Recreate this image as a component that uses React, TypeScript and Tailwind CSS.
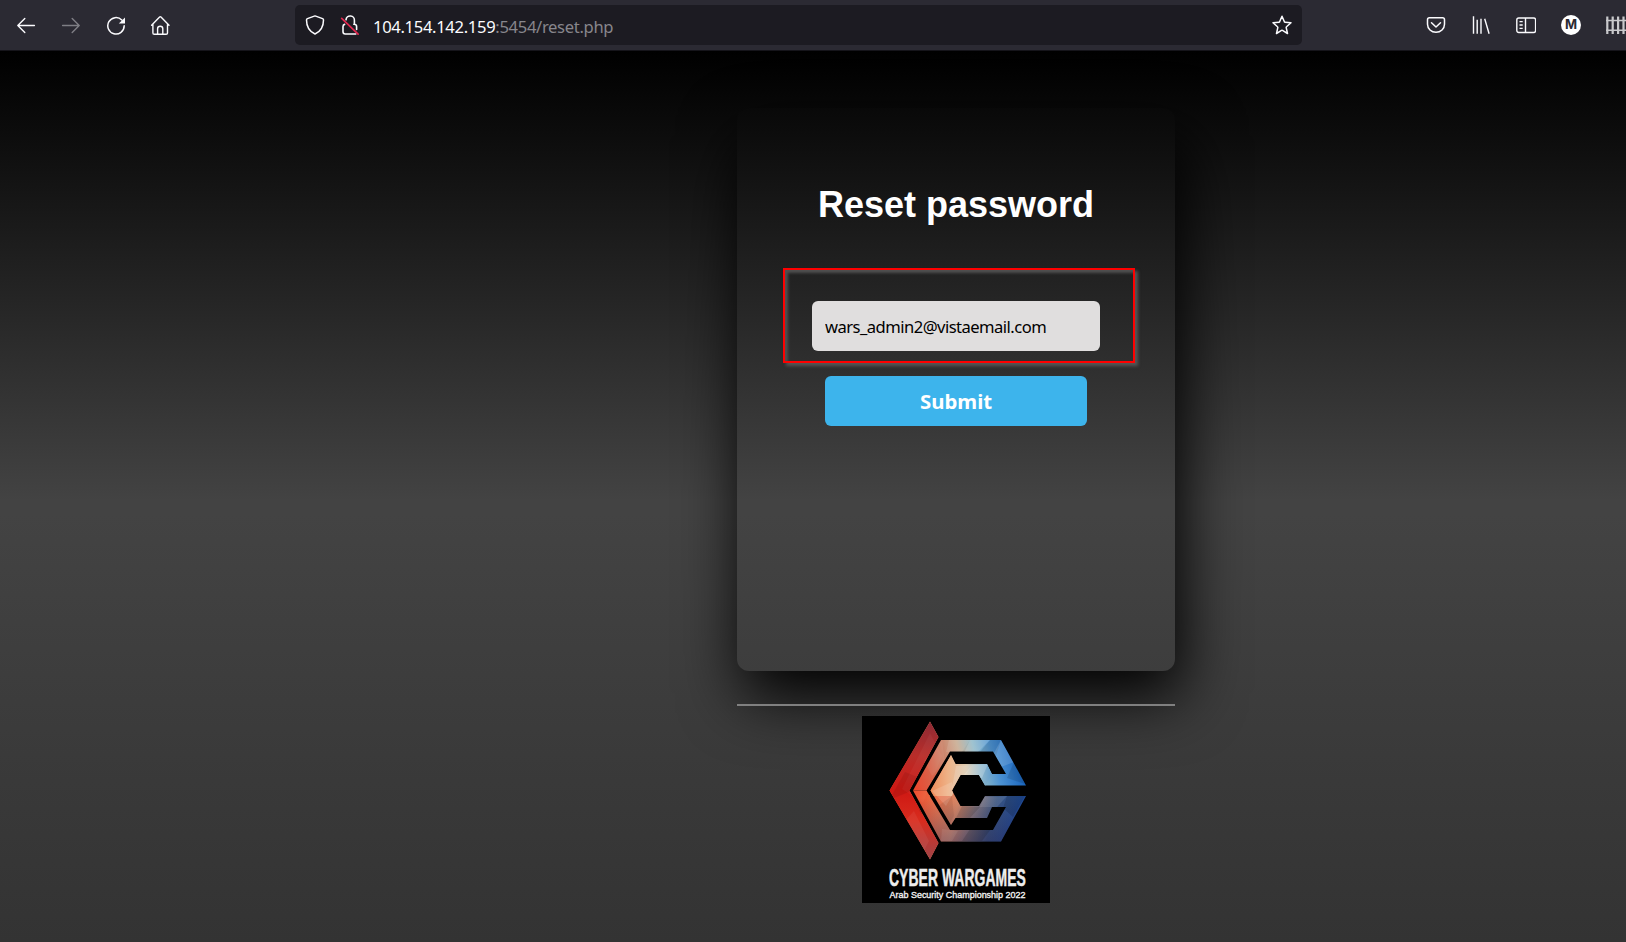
import React from "react";

function Toolbar() {
  return (
    <header className="flex h-[51px] shrink-0 items-start overflow-hidden border-b border-[#15141a] bg-[#2b2a33] text-[#fbfbfe]">
      <nav className="flex w-[295px] shrink-0 items-center gap-[25px] pl-4 pt-[15px]">
        <svg className="size-5" viewBox="0 0 20 20" fill="none" stroke="currentColor" strokeWidth="1.4" strokeLinecap="round" strokeLinejoin="round">
          <path d="M18.4 10.5H1.8M8.8 3.5l-7 7 7 7" />
        </svg>
        <svg className="size-5 opacity-40" viewBox="0 0 20 20" fill="none" stroke="currentColor" strokeWidth="1.4" strokeLinecap="round" strokeLinejoin="round">
          <path d="M1.6 10.5h16.6M11.2 3.5l7 7-7 7" />
        </svg>
        <svg className="size-5" viewBox="0 0 20 20" fill="none" stroke="currentColor" strokeWidth="1.5" strokeLinecap="round">
          <path d="M18.2 10.8a8.2 8.2 0 1 1-2.4-5.8" />
          <path d="M19 2.4v6.2h-6.2z" fill="currentColor" stroke="none" />
        </svg>
        <svg className="-ml-px size-5" viewBox="0 0 20 20" fill="none" stroke="currentColor" strokeWidth="1.4" strokeLinecap="round" strokeLinejoin="round">
          <path d="M1.6 10.2 9.6 2q.7-.7 1.4 0l8 8.2M2.9 9v8.9q0 1.4 1.4 1.4h11.8q1.4 0 1.4-1.4V9M7.6 19v-5.2a2.6 2.6 0 0 1 5.2 0V19" />
        </svg>
      </nav>
      <div className="mt-[5px] flex h-10 w-[1007px] shrink-0 items-center rounded-[5px] bg-[#1c1b22] pl-[10px] pr-[10px]">
        <svg className="size-5 shrink-0" viewBox="0 0 20 20" fill="none" stroke="currentColor" strokeWidth="1.5" strokeLinejoin="round">
          <path d="M10 .9 17.6 3.6q.9.4.9 1.3C18.5 11.5 15.3 16.5 10 19 4.7 16.5 1.5 11.5 1.5 4.9q0-.9.9-1.3z" />
        </svg>
        <svg className="ml-[15px] size-5 shrink-0" viewBox="0 0 20 20" fill="none" strokeLinecap="round">
          <path d="M6 4.8a4.2 4.2 0 0 1 8.4.8v3.7M13.8 9.3q2.8 0 2.8 2.2v3M15.8 19H5.2q-2.2 0-2.2-2.2v-5.4q0-1.6 1.6-2" stroke="currentColor" strokeWidth="1.6" />
          <path d="m1.7 3.3 16.4 15.9" stroke="#e22850" strokeWidth="1.7" />
        </svg>
        <span className="ml-[13px] grow pt-[4px] font-['Noto_Sans',sans-serif] text-[16.6px] tracking-[-0.33px]">
          104.154.142.159<span className="text-[#87868c]">:5454/reset.php</span>
        </span>
        <svg className="size-5 shrink-0" viewBox="0 0 20 20" fill="none" stroke="currentColor" strokeWidth="1.5" strokeLinejoin="round">
          <path d="m10 1.2 2.4 5.6q.2.4.6.4l6 .5-4.5 4.1q-.4.3-.3.8l1.3 5.9-5-3.1q-.5-.3-1 0l-5 3.1 1.3-5.9q.1-.5-.3-.8L1 7.7l6-.5q.4 0 .6-.4z" />
        </svg>
      </div>
      <div className="flex shrink-0 items-center gap-[25px] pl-[124px] pt-[15px]">
        <svg className="size-5" viewBox="0 0 20 20" fill="none" stroke="currentColor" strokeWidth="1.5" strokeLinecap="round" strokeLinejoin="round">
          <path d="M3.4 2.8h13.2q1.9 0 1.9 1.9v4.6a8.5 8 0 0 1-17 0V4.7q0-1.9 1.9-1.9zM5.5 7.7 10 12l4.5-4.3" />
        </svg>
        <svg className="size-5" viewBox="0 0 20 20" fill="none" stroke="currentColor" strokeWidth="1.4">
          <path d="M2.5 1.3v17.5M6.2 4.8v14M10 3.7v15.1M13.7 3.8l4.4 15" />
        </svg>
        <svg className="size-5" viewBox="0 0 20 20" fill="none" stroke="currentColor" strokeWidth="1.4">
          <rect x=".8" y="3" width="18.8" height="14.5" rx="2" />
          <path d="M9.5 3v14.5M3.5 6.6h3.2M3.5 10h3.2M3.5 13.4h3.2" />
        </svg>
        <span className="flex size-5 items-center justify-center rounded-full bg-white font-['Inter',sans-serif] text-[13px] font-bold text-[#2b2a33]">M</span>
        <svg className="-ml-px h-5 w-[22px]" viewBox="0 0 22 20" fill="none" stroke="#c8c8cb" strokeWidth="2.2">
          <path d="M2.3 1.6V19M7.7 1.6V19M13.1 1.6V19M18.5 1.6V19" />
          <path d="M1 5.5h21M1 15.2h21" strokeWidth="1.5" />
        </svg>
      </div>
    </header>
  );
}

const facets: [string, string, number][] = [
  ["40,73 68,17 80,40 61,87", "#fff", 0.04],
  ["27,84 43,56 58,62 47,76", "#000", 0.08],
  ["36,112 52,95 67,125 61,137", "#fff", 0.06],
  ["62,45 80,24 83,46 70,60", "#fff", 0.06],
  ["58,96 72,110 62,100 52,80", "#000", 0.12],
  ["87,24 108,24 100,36 84,36", "#fff", 0.1],
  ["108,24 128,24 115,37 102,37", "#fff", 0.16],
  ["128,24 139,24 134,40 118,36", "#000", 0.1],
  ["139,24 152,46 139,51 132,37", "#fff", 0.14],
  ["152,46 163,68 145,62", "#000", 0.12],
  ["94,50 110,49 102,61 90,72", "#fff", 0.16],
  ["110,49 126,48 120,62 102,59", "#fff", 0.22],
  ["70,75 90,66 92,76 84,90", "#fff", 0.14],
  ["76,90 90,80 92,100 88,107", "#000", 0.07],
  ["100,90 118,91 108,102 94,102", "#000", 0.12],
  ["122,81 145,80 135,91 118,91", "#fff", 0.1],
  ["145,80 163,80 151,101 141,92", "#000", 0.14],
  ["108,113 129,113 120,125 100,125", "#000", 0.14],
  ["80,113 96,115 90,125 79,125", "#fff", 0.08],
];

function Logo() {
  return (
    <svg className="h-[187px] w-[188px] overflow-visible bg-black" viewBox="0 0 188 187">
      <defs>
        <linearGradient id="warm" x1="0" y1="0" x2="0" y2="1">
          <stop offset="0" stopColor="#8c2b35" />
          <stop offset=".25" stopColor="#b92d29" />
          <stop offset=".5" stopColor="#cf1813" />
          <stop offset=".72" stopColor="#d82c1e" />
          <stop offset="1" stopColor="#a04448" />
        </linearGradient>
        <linearGradient id="upper" gradientUnits="userSpaceOnUse" x1="52" y1="78" x2="160" y2="52">
          <stop offset="0" stopColor="#eb3d23" />
          <stop offset=".2" stopColor="#d65f45" />
          <stop offset=".34" stopColor="#cd836a" />
          <stop offset=".48" stopColor="#c9ac92" />
          <stop offset=".62" stopColor="#8db8c8" />
          <stop offset=".78" stopColor="#4c92d2" />
          <stop offset="1" stopColor="#1864bd" />
        </linearGradient>
        <linearGradient id="lower" gradientUnits="userSpaceOnUse" x1="52" y1="72" x2="160" y2="98">
          <stop offset="0" stopColor="#f04726" />
          <stop offset=".25" stopColor="#e87650" />
          <stop offset=".42" stopColor="#d98a68" />
          <stop offset=".58" stopColor="#85777d" />
          <stop offset=".75" stopColor="#3a5580" />
          <stop offset="1" stopColor="#1d4a9a" />
        </linearGradient>
        <linearGradient id="shade" x1="0" y1="0" x2="0" y2="1">
          <stop offset=".65" stopColor="#251c4a" stopOpacity="0" />
          <stop offset="1" stopColor="#251c4a" stopOpacity=".4" />
        </linearGradient>
        <linearGradient id="core" gradientUnits="userSpaceOnUse" x1="68" y1="74" x2="140" y2="74">
          <stop offset="0" stopColor="#ee8a58" />
          <stop offset=".25" stopColor="#eeb287" />
          <stop offset=".5" stopColor="#dcc9ae" />
          <stop offset=".7" stopColor="#8fb8cc" />
          <stop offset="1" stopColor="#3d86cc" />
        </linearGradient>
        <clipPath id="shape">
          <path d="M68 5.5 76.500 21 47.500 74.500 76.500 127 68 143.500 27.500 74.500z" />
          <path
            clipRule="evenodd"
            d="M79 24H139L164 69.500H123L117 59H98.500L90 74.500 98.500 90H117L123 80H164L139 125.500H79L51 74.500zM88 35.500H131L144 58H130L125 48H93.500L89 39 68.500 74.500 89 109 93.500 102H125L130 91H144L131 114H88L64.500 74.500z"
          />
        </clipPath>
      </defs>
      <g clipPath="url(#shape)">
        <path d="M20 0h168v74.500H20z" fill="url(#upper)" />
        <path d="M20 74.500h168V150H20z" fill="url(#lower)" />
        <path d="M67 80 67 74.500 89 38l5 9h31l5 11-7 12-7.500-10.500H99L90 80z" fill="url(#core)" />
        <path d="M40 0h148v126H40z" fill="url(#shade)" />
        <path d="M68 5.500 77 21 47.500 74.500 77 127 68 143.500 27 74.500z" fill="url(#warm)" />
        {facets.map(([points, fill, opacity]) => (
          <polygon key={points} points={points} fill={fill} opacity={opacity} />
        ))}
      </g>
      <text transform="translate(27 170) scale(.58 1)" textLength="236" fill="#ededed" stroke="#ededed" strokeWidth=".5" fontFamily="Liberation Sans, sans-serif" fontWeight="700" fontSize="24">CYBER WARGAMES</text>
      <text x="27.5" y="182" textLength="136" lengthAdjust="spacingAndGlyphs" fill="#f2f2f2" stroke="#f2f2f2" strokeWidth=".35" fontFamily="Liberation Sans, sans-serif" fontSize="9.4">Arab Security Championship 2022</text>
    </svg>
  );
}

export default function App() {
  return (
    <div className="flex h-[942px] w-[1626px] flex-col overflow-hidden">
      <Toolbar />
      <main className="flex min-h-0 grow flex-col items-center bg-[linear-gradient(to_bottom,#000_0%,#434343_50.5%,#434343_52%,#333_100%)] pl-[286px]">
        <section className="mt-[57px] flex h-[563px] w-[438px] shrink-0 flex-col items-center rounded-[12px] pt-[73px] shadow-[6px_25px_62px_#000]">
          <h1 className="font-['Liberation_Sans',sans-serif] text-[36px] font-bold leading-[48px] text-white">Reset password</h1>
          <form className="relative mt-[72px] flex flex-col items-center gap-[25px]" onSubmit={(e) => e.preventDefault()}>
            <input
              className="h-[50px] w-[288px] rounded-[6px] bg-[#e0dede] px-[13px] font-['Noto_Sans',sans-serif] text-[16.6px] tracking-[-0.54px] text-black outline-none"
              defaultValue="wars_admin2@vistaemail.com"
            />
            <button className="h-[50px] w-[262px] rounded-[6px] bg-[#3db4ec] font-['Noto_Sans',sans-serif] text-[20.4px] font-bold text-white">Submit</button>
            <div className="pointer-events-none absolute -left-[29px] -top-[33px] h-[95px] w-[352px] border-2 border-[#ff0000] shadow-[3px_3px_3px_#555,inset_3px_3px_3px_#505050]" />
          </form>
        </section>
        <hr className="mt-[33px] w-[438px] shrink-0 border-0 border-t-2 border-[#808080]" />
        <div className="mt-[10px] shrink-0">
          <Logo />
        </div>
      </main>
    </div>
  );
}
